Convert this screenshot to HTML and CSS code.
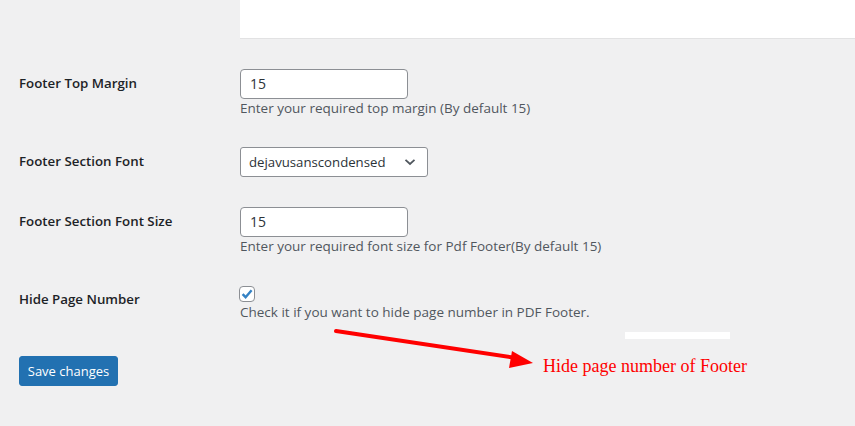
FILE: index.html
```html
<!DOCTYPE html>
<html>
<head>
<meta charset="utf-8">
<link rel="stylesheet" href="styles.css">
</head>
<body>
<div class="page">
  <div class="top-row">
    <div></div>
    <div class="editor-box"></div>
  </div>

  <div class="form-row row-desc">
    <div class="label">Footer Top Margin</div>
    <div class="field">
      <div class="input">15</div>
      <p class="desc">Enter your required top margin (By default 15)</p>
    </div>
  </div>

  <div class="form-row">
    <div class="label">Footer Section Font</div>
    <div class="field">
      <div class="select">
        <span>dejavusanscondensed</span>
        <svg class="chev" width="12" height="8" viewBox="0 0 12 8"><path d="M1.5 1.8 L6 6 L10.5 1.8" fill="none" stroke="#50575e" stroke-width="1.8"/></svg>
      </div>
    </div>
  </div>

  <div class="form-row row-desc">
    <div class="label">Footer Section Font Size</div>
    <div class="field">
      <div class="input">15</div>
      <p class="desc">Enter your required font size for Pdf Footer(By default 15)</p>
    </div>
  </div>

  <div class="form-row row-check">
    <div class="label">Hide Page Number</div>
    <div class="field">
      <div class="checkbox">
        <svg width="14" height="14" viewBox="0 0 14 14"><path d="M2.6 7.2 L5.6 10.2 L11.6 3.2" fill="none" stroke="#3582c4" stroke-width="2.4"/></svg>
      </div>
      <p class="desc">Check it if you want to hide page number in PDF Footer.</p>
    </div>
  </div>

  <div class="submit">
    <button class="button">Save changes</button>
  </div>

  <div class="annotation">
    <div class="white-bar"></div>
    <svg class="arrow" width="855" height="426" viewBox="0 0 855 426">
      <line x1="336" y1="331" x2="516" y2="358" stroke="#ff0000" stroke-width="4" stroke-linecap="round"/>
      <polygon points="512,351 533,363 509,368" fill="#ff0000"/>
    </svg>
    <div class="note">Hide page number of Footer</div>
  </div>
</div>
</body>
</html>
```

FILE: styles.css
```css
html, body {
  margin: 0;
  padding: 0;
}
body {
  background: #f0f0f1;
  font-family: "Open Sans", "Noto Sans", sans-serif;
  font-size: 13px;
  color: #1d2327;
  width: 855px;
  height: 426px;
  overflow: hidden;
}
.page {
  padding-left: 19px;
}
.top-row {
  display: grid;
  grid-template-columns: 221px 1fr;
}
.editor-box {
  height: 38px;
  background: #fff;
  border-bottom: 1px solid #e2e2e3;
}
.form-row {
  display: grid;
  grid-template-columns: 221px 1fr;
  padding: 15px 0;
}
.top-row + .form-row {
  margin-top: 15px;
}
.label {
  font-weight: 600;
  font-size: 13.3px;
  line-height: 17px;
  padding-top: 6px;
  white-space: nowrap;
}
.field {
  display: flex;
  flex-direction: column;
  align-items: flex-start;
}
.input {
  box-sizing: border-box;
  width: 168px;
  height: 30px;
  border: 1px solid #8c8f94;
  border-radius: 4px;
  background: #fff;
  padding: 0 9px;
  line-height: 28px;
  font-size: 14px;
  color: #2c3338;
}
.select {
  box-sizing: border-box;
  width: 188px;
  height: 30px;
  border: 1px solid #8c8f94;
  border-radius: 3px;
  background: #fff;
  padding: 0 11px 0 8px;
  display: flex;
  align-items: center;
  justify-content: space-between;
  font-size: 13.2px;
  color: #2c3338;
}
.chev {
  display: block;
}
.desc {
  margin: 0;
  font-size: 13.5px;
  line-height: 18px;
  color: #50575e;
  white-space: nowrap;
}
.row-check .field {
  padding-top: 1px;
}
.checkbox {
  box-sizing: border-box;
  width: 16px;
  height: 16px;
  border: 1px solid #8c8f94;
  border-radius: 4px;
  background: #fff;
  display: flex;
  align-items: center;
  justify-content: center;
  margin: 0 0 1px -1px;
}
.checkbox svg {
  display: block;
}
.submit {
  margin-top: 20px;
}
.button {
  box-sizing: border-box;
  width: 99px;
  height: 30px;
  background: #2271b1;
  border: 1px solid #2271b1;
  border-radius: 3px;
  color: #fff;
  font-family: "Open Sans", "Noto Sans", sans-serif;
  font-size: 13px;
  padding: 0;
  line-height: 28px;
}
.annotation {
  position: absolute;
  left: 0;
  top: 0;
  width: 855px;
  height: 426px;
  pointer-events: none;
}
.arrow {
  position: absolute;
  left: 0;
  top: 0;
}
.white-bar {
  position: absolute;
  left: 625px;
  top: 332px;
  width: 105px;
  height: 7px;
  background: #fff;
}
.note {
  position: absolute;
  left: 543px;
  top: 355px;
  font-family: "Liberation Serif", "Times New Roman", serif;
  font-size: 18px;
  line-height: 22px;
  color: #ff0000;
  white-space: nowrap;
}
```
